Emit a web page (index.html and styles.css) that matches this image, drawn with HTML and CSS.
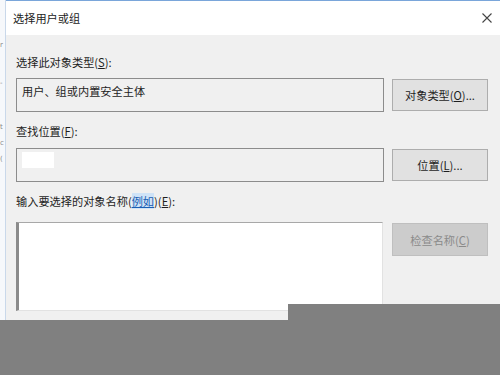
FILE: index.html
```html
<!DOCTYPE html>
<html lang="zh-CN">
<head>
    <meta charset="UTF-8">
    <title>选择用户或组</title>
    <link rel="stylesheet" href="styles.css">
</head>
<body>
    <div class="screen">
        <!-- window behind the dialog -->
        <div class="behind">
            <div class="behind-line l1">r</div>
            <div class="behind-line l2">-</div>
            <div class="behind-line l3">t</div>
            <div class="behind-line l4">c</div>
            <div class="behind-line l5">(</div>
        </div>

        <div class="dialog">
            <div class="titlebar">
                <span class="title">选择用户或组</span>
                <svg class="close" width="10" height="10" viewBox="0 0 10 10">
                    <path d="M0.5 0.5 L9.5 9.5 M9.5 0.5 L0.5 9.5" stroke="#444" stroke-width="1.1" fill="none"/>
                </svg>
            </div>

            <div class="content">
                <div class="label">选择此对象类型(<u>S</u>):</div>
                <div class="row">
                    <div class="field">用户、组或内置安全主体</div>
                    <button class="btn">对象类型(<u>O</u>)...</button>
                </div>

                <div class="label second">查找位置(<u>F</u>):</div>
                <div class="row">
                    <div class="field"><span class="blurred"></span></div>
                    <button class="btn">位置(<u>L</u>)...</button>
                </div>

                <div class="label third">输入要选择的对象名称(<a class="link">例如</a>)(<u>E</u>):</div>
                <div class="row top">
                    <div class="names"></div>
                    <button class="btn disabled">检查名称(<u>C</u>)</button>
                </div>
            </div>
        </div>

        <!-- grey cover over the lower part of the picture -->
        <div class="cover-bottom"></div>
        <div class="cover-right"></div>
    </div>
</body>
</html>
```

FILE: styles.css
```css
/* page */
body {
    margin: 0;
    font-family: "Noto Sans CJK SC", "Noto Sans", sans-serif;
    font-size: 11.2px;
    color: #1e1e1e;
}

.screen {
    position: relative;
    width: 500px;
    height: 375px;
    overflow: hidden;
    display: flex;
}

/* window behind */
.behind {
    width: 5px;
    background-color: #f6f8fb;
    border-right: 1px solid #c9d8ea;
    color: #888;
    font-family: "DejaVu Sans", sans-serif;
    font-size: 7px;
}

.behind-line {
    line-height: 10px;
}

.l1 { margin-top: 40px; }
.l2 { margin-top: 28px; }
.l3 { margin-top: 34px; }
.l4 { margin-top: 6px; }
.l5 { margin-top: 6px; }

/* dialog */
.dialog {
    flex: 1;
    background-color: #f0f0f0;
    border-top: 1px solid #7aa6da;
}

.titlebar {
    height: 34px;
    background-color: #fff;
    display: flex;
    align-items: center;
    justify-content: space-between;
    padding: 0 8px 0 7px;
}

.title {
    color: #222;
}

.close {
    display: block;
}

.content {
    padding: 19px 0 0 10px;
}

.label {
    line-height: 16px;
    margin-bottom: 8px;
}

.label.second {
    margin-bottom: 9px;
}

.label.third {
    margin-top: 3px;
    margin-bottom: 13px;
}

.row {
    display: flex;
    align-items: center;
    margin-bottom: 11px;
}

.row.top {
    align-items: flex-start;
}

.field {
    box-sizing: border-box;
    width: 368px;
    height: 34px;
    border: 1px solid #8c8c8c;
    background-color: #f0f0f0;
    padding: 4px 5px 0;
    line-height: 16px;
}

.blurred {
    display: block;
    width: 32px;
    height: 16px;
    margin-top: -1px;
    background-color: #fff;
}

.names {
    box-sizing: border-box;
    width: 367px;
    height: 89px;
    background-color: #fff;
    border-top: 1px solid #a8a8a8;
    border-left: 3px solid #8a8a8a;
    border-right: 1px solid #e2e2e2;
    border-bottom: 1px solid #e2e2e2;
}

.btn {
    box-sizing: border-box;
    width: 96px;
    height: 32px;
    margin-left: 8px;
    background-color: #e1e1e1;
    border: 1px solid #adadad;
    font-family: inherit;
    font-size: 11.2px;
    color: #1e1e1e;
    padding: 0;
}

.btn.disabled {
    height: 33px;
    margin-left: 9px;
    margin-top: 1px;
    background-color: #cccccc;
    border-color: #bfbfbf;
    color: #8a8a8a;
}

.link {
    color: #1a5fb4;
    background-color: #cfe3f7;
    text-decoration: underline;
}

/* grey overlay */
.cover-bottom {
    position: absolute;
    left: 0;
    top: 320px;
    width: 500px;
    height: 55px;
    background-color: #808080;
}

.cover-right {
    position: absolute;
    left: 288px;
    top: 304px;
    width: 212px;
    height: 16px;
    background-color: #808080;
}
```
